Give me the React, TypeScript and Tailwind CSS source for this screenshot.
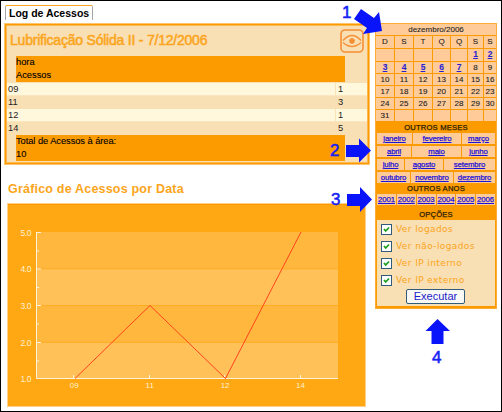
import { Fragment, type ReactNode } from "react";

const rows = [
  ["09", "1"],
  ["11", "3"],
  ["12", "1"],
  ["14", "5"],
];

const weeks = [
  ["", "", "", "", "", "1", "2"],
  ["3", "4", "5", "6", "7", "8", "9"],
  ["10", "11", "12", "13", "14", "15", "16"],
  ["17", "18", "19", "20", "21", "22", "23"],
  ["24", "25", "26", "27", "28", "29", "30"],
  ["31", "", "", "", "", "", ""],
];

const months = [
  { cols: "grid-cols-[35px_48px_33px]", names: ["janeiro", "fevereiro", "março"] },
  { cols: "grid-cols-[34px_49px_33px]", names: ["abril", "maio", "junho"] },
  { cols: "grid-cols-[27px_38px_51px]", names: ["julho", "agosto", "setembro"] },
  { cols: "grid-cols-[33px_42px_41px]", names: ["outubro", "novembro", "dezembro"] },
];

const years = ["2001", "2002", "2003", "2004", "2005", "2006"];
const options = ["Ver logados", "Ver não-logados", "Ver IP interno", "Ver IP externo"];

function Eye() {
  return (
    <svg className="mt-[3px] h-6 w-6" viewBox="0 0 24 24" fill="none" stroke="#f78f35">
      <rect x="1" y="1" width="22" height="22" rx="4" strokeWidth="1.6" />
      <path d="M3 11.5Q7.5 6.5 12 6.5T21 11.5" strokeWidth="1.4" />
      <path d="M3 13.5Q7.5 17.5 12 17.5T21 13.5" strokeWidth="1.4" />
      <circle cx="12" cy="12" r="2.4" fill="#f78f35" strokeWidth="1" />
    </svg>
  );
}

function LogPanel() {
  return (
    <section className="ml-[3px] h-[142px] w-[366px] border border-[#fdc56f] bg-[#fb9b00] p-px">
      <div className="h-full border border-[#fdb84f] bg-[#f9dfb4]">
        <div className="flex h-[30px] justify-between pl-[3px] pr-[3px]">
          <h1 className="whitespace-nowrap pt-[5px] text-[14px] leading-[18px] tracking-[-0.22px] text-[#fba51b] [-webkit-text-stroke:0.5px]">
            Lubrificação Sólida II - 7/12/2006
          </h1>
          <Eye />
        </div>
        <div className="ml-[9px] h-[26px] w-[329px] bg-[#fb9b00] text-[9.3px] leading-[13px] [-webkit-text-stroke:0.1px]">
          <p>hora</p>
          <p>Acessos</p>
        </div>
        <div className="mt-px">
          {rows.map(([hour, count], i) => (
            <div
              key={hour}
              className={`flex h-[13px] text-[9.3px] leading-[12px] text-[#222] ${i % 2 ? "" : "border-b border-[#fbe6bf] bg-[#fff8dc]"}`}
            >
              <span className={`w-[329px] pl-px ${i % 2 ? "" : "border-r border-[#fbe3b8]"}`}>{hour}</span>
              <span className="pl-[2px]">{count}</span>
            </div>
          ))}
        </div>
        <div className="ml-[9px] h-[26px] w-[329px] bg-[#fb9b00] text-[9.3px] leading-[13px] [-webkit-text-stroke:0.1px]">
          <p className="tracking-[-0.05px]">Total de Acessos à área:</p>
          <p>10</p>
        </div>
      </div>
    </section>
  );
}

function Chart() {
  const line = "75,378.5 150,305.5 225.5,378.5 301,232";
  return (
    <svg className="ml-[6px] mt-[4px] block h-[204px] w-[359px]" viewBox="7 203 359 204" fontFamily="Liberation Sans, sans-serif">
      <rect x="7.5" y="203.5" width="358" height="203" fill="#ffa813" stroke="#fed18a" />
      <path d="M8 204.5H365" stroke="#ff9900" />
      <path d="M37 232H338V269H37ZM37 306H338V342H37Z" fill="#ffb73e" />
      <path d="M37 269H338V306H37ZM37 342H338V379H37Z" fill="#ffc158" />
      <path d="M37 268.8H338M37 305.5H338M37 342.4H338" stroke="#ffac24" />
      <path d="M36.5 232V378.5H338M36 232.5H41M36 269H41M36 305.5H41M36 342.5H41M36 251H39M36 287.5H39M36 324H39M36 361H39M73.5 375V379M149.5 375V379M224.5 375V379M300.5 375V379" stroke="#fff3db" fill="none" />
      <polyline points={line} fill="none" stroke="#ff421c" />
      <g fill="#fff0cf" fontSize="8.5" fontWeight="400">
        {["5.0", "4.0", "3.0", "2.0", "1.0"].map((n, i) => (
          <text key={n} x="31.5" y={235.5 + i * 36.7} textAnchor="end" textLength="11">{n}</text>
        ))}
        {["09", "11", "12", "14"].map((n, i) => (
          <text key={n} x={74.3 + i * 75.4} y="387.5" textAnchor="middle" fontSize="8">{n}</text>
        ))}
      </g>
    </svg>
  );
}

function Bar({ children }: { children: ReactNode }) {
  return (
    <h3 className="text-center text-[7.6px] tracking-[0.2px] text-[#2b1d05] [-webkit-text-stroke:0.25px]">
      {children}
    </h3>
  );
}

function Sidebar() {
  return (
    <aside className="ml-px mt-[22px] h-[286px] w-[122px] border border-[#fdab35] bg-[#fb9b00]">
      <div className="grid grid-cols-[18px_18px_18px_17px_16px_15px_12px] grid-rows-[11px_12px_12px_11px_11px_11px_11px_11px] gap-px text-center text-[8px] leading-[11px] text-[#222] [-webkit-text-stroke:0.1px]">
        <div className="col-span-7 bg-[#ffcc99] text-[8px]">dezembro/2006</div>
        {["D", "S", "T", "Q", "Q", "S", "S"].map((d, i) => (
          <div key={i} className="bg-[#ffcc99]">{d}</div>
        ))}
        {weeks.map((week, w) => (
          <Fragment key={w}>
            {week.map((d, i) => (
              <div key={i} className="bg-[#ffcc99]">
                {d && Number(d) < 8 ? <a className="text-[8.5px] font-bold text-[#2a1fd0] underline">{d}</a> : d}
              </div>
            ))}
          </Fragment>
        ))}
      </div>
      <div className="h-[12px] leading-[13px]"><Bar>OUTROS MESES</Bar></div>
      <div className="flex flex-col gap-[2px] pl-px">
        {months.map((m) => (
          <div key={m.names[0]} className={`grid h-[11px] gap-x-px text-center text-[7.8px] leading-[11px] tracking-[-0.15px] text-[#1d14d8] [-webkit-text-stroke:0.25px] ${m.cols}`}>
            {m.names.map((n) => (
              <a key={n} className="bg-[#ffcc99] underline">{n}</a>
            ))}
          </div>
        ))}
      </div>
      <div className="h-[11px] leading-[12px]"><Bar>OUTROS ANOS</Bar></div>
      <div className="grid h-[11px] grid-cols-6 gap-x-px px-px text-center text-[7.8px] leading-[11px] tracking-[-0.1px] text-[#1d14d8] [-webkit-text-stroke:0.25px]">
        {years.map((y) => (
          <a key={y} className="bg-[#ffcc99] underline">{y}</a>
        ))}
      </div>
      <div className="h-[15px] pt-[3px] leading-[13px]"><Bar>OPÇÕES</Bar></div>
      <div className="mx-px h-[86px] bg-[#f9dfb4] pl-[4px] pt-px">
        {options.map((o) => (
          <label key={o} className="flex h-[17px] items-center gap-[4px] whitespace-nowrap font-['DejaVu_Sans',sans-serif] text-[9px] tracking-[0.4px] text-[#fba51b]">
            <svg className="h-[11px] w-[11px]" viewBox="0 0 11 11">
              <rect x=".5" y=".5" width="10" height="10" fill="#fff" stroke="#315b7d" />
              <path d="M3 5L4.7 7L8 3.5" fill="none" stroke="#20a020" strokeWidth="1.8" />
            </svg>
            {o}
          </label>
        ))}
        <button className="ml-[25px] block h-[15px] w-[59px] rounded-[2px] border border-[#315b7d] bg-[#f8f8f5] text-[11px] leading-[13px] text-[#1c1ccc]">
          Executar
        </button>
      </div>
    </aside>
  );
}

function Callouts() {
  return (
    <svg className="pointer-events-none absolute -left-px -top-px h-[412px] w-[502px]" viewBox="0 0 502 412" fill="#0a14fa">
      <path d="M361 9L374 18L379 12L382 31L363 34L367 28L354 19Z" />
      <path d="M346 145H359V138.5L371 150.5L359 162.5V157H346Z" />
      <path d="M347 194H360V187L372 199.5L360 212V206H347Z" />
      <path d="M437.5 319L450 331H443.5V344H431.5V331H425.5Z" />
      <g fontFamily="Liberation Sans, sans-serif" fontSize="17" stroke="#0a14fa" strokeWidth=".5" fill="#1a28f0">
        <text x="342" y="18">1</text>
        <text x="330" y="156">2</text>
        <text x="331" y="205">3</text>
        <text x="432" y="363">4</text>
      </g>
    </svg>
  );
}

export default function App() {
  return (
    <main className="relative flex h-[412px] w-[502px] overflow-hidden border border-black bg-white font-['Liberation_Sans',Arial,sans-serif] text-black">
      <div className="w-[373px] shrink-0">
        <div className="ml-[4px] mt-[4px] h-[15px] w-[88px] whitespace-nowrap rounded-t-[2px] border-x border-t border-x-[#a5a5a5] border-t-[#fba51b] pl-[3px] text-[10.5px] font-bold leading-[15px]">
          Log de Acessos
        </div>
        <div className="mt-[3px]"><LogPanel /></div>
        <h2 className="mt-[15px] ml-[7px] mb-[5px] h-[18px] whitespace-nowrap text-[12.5px] font-bold leading-[18px] tracking-[0.2px] text-[#fba51b]">
          Gráfico de Acessos por Data
        </h2>
        <Chart />
      </div>
      <Sidebar />
      <Callouts />
    </main>
  );
}
